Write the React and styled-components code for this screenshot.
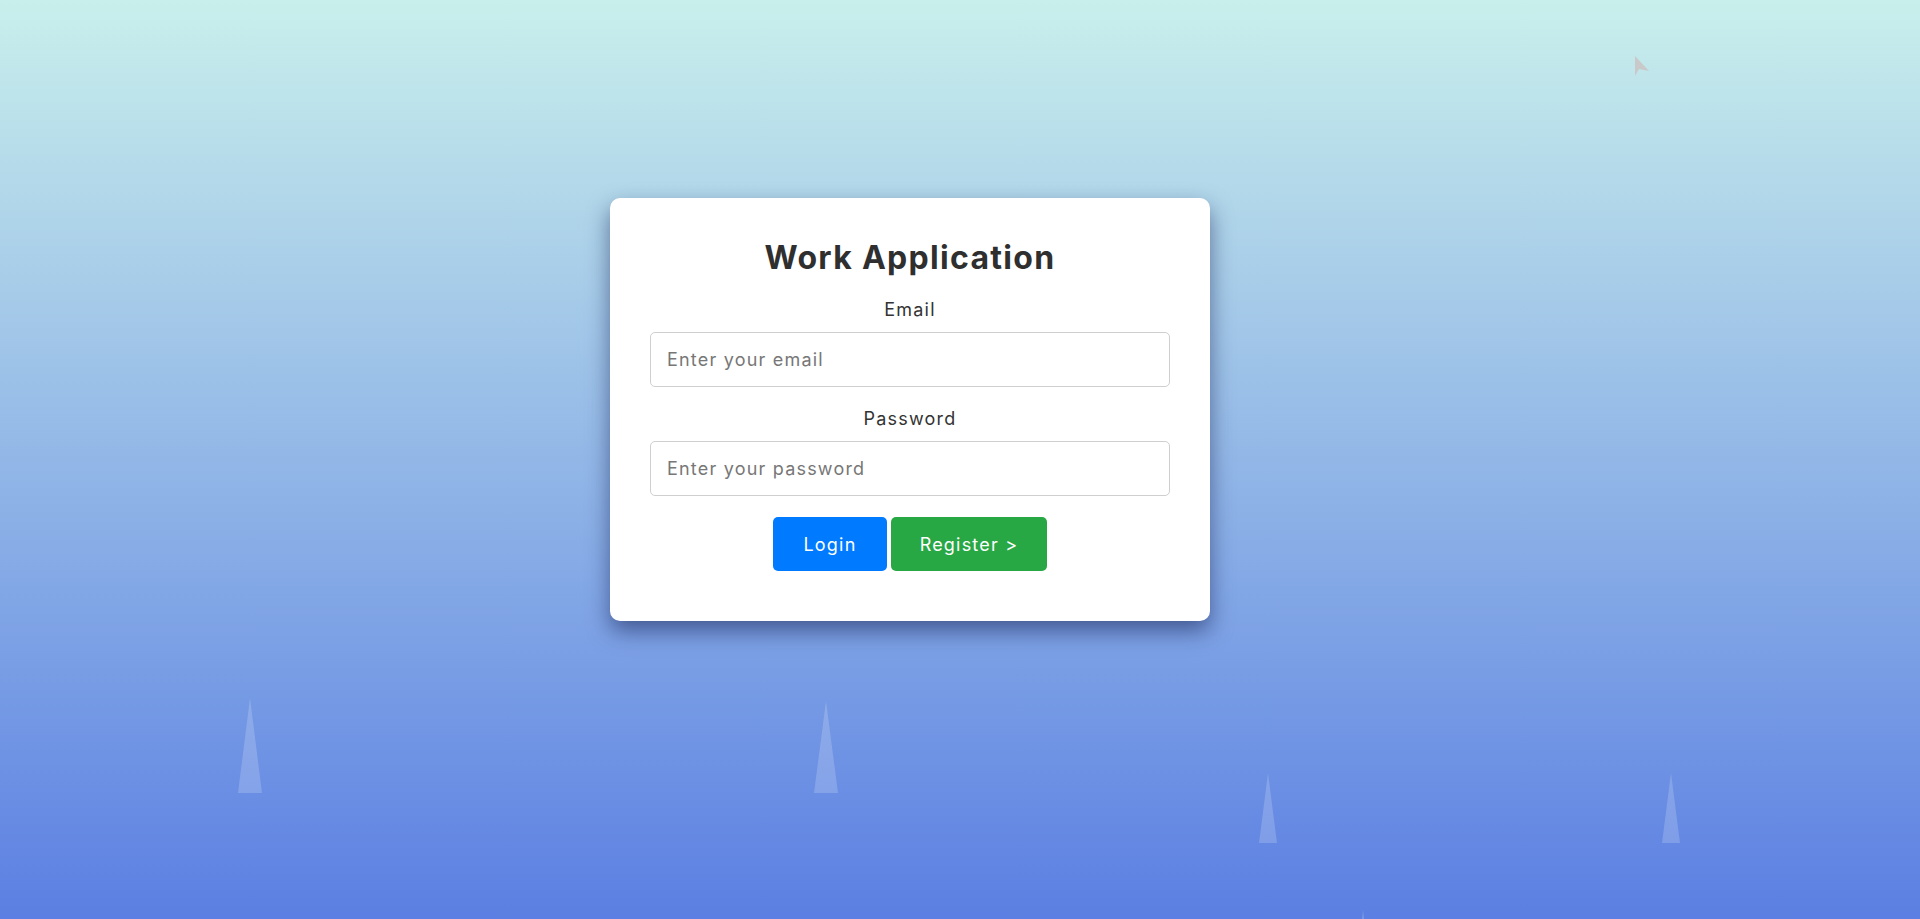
import React from 'react'
import styled, { createGlobalStyle } from 'styled-components';

const GlobalStyle = createGlobalStyle`
    * { box-sizing: border-box; }
    html, body { margin: 0; padding: 0; height: 100%; }
    body {
        font-family: Inter, "Open Sans", Arial, sans-serif;
        color: #333;
    }
`;

const PageStyled = styled.div`
    position: relative;
    width: 100%;
    height: 919px;
    overflow: hidden;
    background: linear-gradient(to bottom, #c9efec 0%, #5b7fe2 100%);
    display: flex;
    justify-content: flex-start;
    align-items: flex-start;
    padding: 198px 0 0 610px;
`;

/* rising spikes in the back */
const SpikeStyled = styled.div`
    position: absolute;
    left: ${({ x }) => x}px;
    top: ${({ y }) => y}px;
    width: ${({ w }) => w}px;
    height: ${({ h }) => h}px;
    background: rgba(255, 255, 255, 0.18);
    clip-path: polygon(50% 0, 100% 100%, 0 100%);
`;

const PointerStyled = styled.svg`
    position: absolute;
    left: 1634px;
    top: 55px;
`;

const CardStyled = styled.div`
    position: relative;
    z-index: 1;
    width: 600px;
    background: #fff;
    border-radius: 10px;
    padding: 40px 40px 50px;
    box-shadow: 0 10px 22px rgba(20, 30, 80, 0.55);
    text-align: center;
`;

const TitleStyled = styled.h2`
    margin: 0 0 21px;
    font-size: 32px;
    line-height: 40px;
    font-weight: 700;
    letter-spacing: 1.3px;
    color: #2f2f2f;
`;

const FieldStyled = styled.div`
    margin-bottom: 21px;

    label {
        display: block;
        font-size: 18px;
        line-height: 22px;
        letter-spacing: 1.2px;
        color: #333;
        margin-bottom: 11px;
    }
`;

const InputStyled = styled.input`
    display: block;
    width: 100%;
    height: 55px;
    padding: 0 16px;
    border: 1.5px solid #cfcfcf;
    border-radius: 5px;
    font-family: inherit;
    font-size: 18px;
    letter-spacing: 1.2px;
    color: #333;
    outline: none;

    &::placeholder {
        color: #777;
    }
`;

const ButtonRowStyled = styled.div`
    display: flex;
    justify-content: center;
    gap: 4px;
`;

const ButtonStyled = styled.button`
    height: 54px;
    width: ${({ wide }) => wide ? 156 : 114}px;
    border: none;
    border-radius: 5px;
    background: ${({ color }) => color};
    color: #fff;
    font-family: inherit;
    font-size: 18px;
    letter-spacing: 1.2px;
    cursor: pointer;
`;

const spikes = [
    { x: 238, y: 698, w: 24, h: 95 },
    { x: 814, y: 701, w: 24, h: 92 },
    { x: 1259, y: 773, w: 18, h: 70 },
    { x: 1662, y: 773, w: 18, h: 70 },
    { x: 1354, y: 910, w: 18, h: 70 },
];

export default function App() {
    return (
        <>
            <GlobalStyle />
            <PageStyled>
                {spikes.map((s, i) => <SpikeStyled key={i} {...s} />)}
                <PointerStyled width="16" height="22" viewBox="0 0 16 22">
                    <polygon points="1,1 15,16 5,14 1,21" fill="#c9c9c9" />
                </PointerStyled>
                <CardStyled>
                    <TitleStyled>Work Application</TitleStyled>
                    <FieldStyled>
                        <label>Email</label>
                        <InputStyled type="email" placeholder="Enter your email" />
                    </FieldStyled>
                    <FieldStyled>
                        <label>Password</label>
                        <InputStyled type="password" placeholder="Enter your password" />
                    </FieldStyled>
                    <ButtonRowStyled>
                        <ButtonStyled color="#007bff">Login</ButtonStyled>
                        <ButtonStyled color="#28a745" wide>Register &gt;</ButtonStyled>
                    </ButtonRowStyled>
                </CardStyled>
            </PageStyled>
        </>
    )
}
